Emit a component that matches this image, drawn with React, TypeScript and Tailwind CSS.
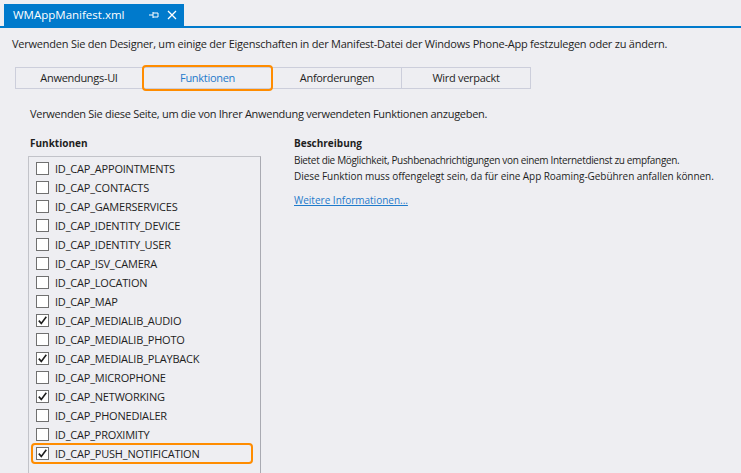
import React from "react";

const items: [string, boolean][] = [
  ["ID_CAP_APPOINTMENTS", false],
  ["ID_CAP_CONTACTS", false],
  ["ID_CAP_GAMERSERVICES", false],
  ["ID_CAP_IDENTITY_DEVICE", false],
  ["ID_CAP_IDENTITY_USER", false],
  ["ID_CAP_ISV_CAMERA", false],
  ["ID_CAP_LOCATION", false],
  ["ID_CAP_MAP", false],
  ["ID_CAP_MEDIALIB_AUDIO", true],
  ["ID_CAP_MEDIALIB_PHOTO", false],
  ["ID_CAP_MEDIALIB_PLAYBACK", true],
  ["ID_CAP_MICROPHONE", false],
  ["ID_CAP_NETWORKING", true],
  ["ID_CAP_PHONEDIALER", false],
  ["ID_CAP_PROXIMITY", false],
  ["ID_CAP_PUSH_NOTIFICATION", true],
];

function Check({ checked }: { checked: boolean }) {
  return (
    <div className="w-[13px] h-[13px] border border-[#707070] bg-white flex items-center justify-center shrink-0">
      {checked && (
        <svg width="11" height="11" viewBox="0 0 11 11">
          <path d="M1.8 5.6 L4.3 8.4 L9.3 1.8" fill="none" stroke="#1e1e1e" strokeWidth="1.6" />
        </svg>
      )}
    </div>
  );
}

export default function App() {
  return (
    <div
      className="w-[741px] h-[473px] bg-[#eeeef2] overflow-hidden text-[#1e1e1e] text-[11px] leading-[16px] whitespace-nowrap"
      style={{ fontFamily: '"Open Sans", "Noto Sans", sans-serif' }}
    >
      {/* document tab */}
      <div className="pt-[4px] pl-[4px] flex">
        <div className="w-[180px] h-[22px] bg-[#007acc] text-white flex items-center pl-[9px]">
          <span className="text-[11.5px]">WMAppManifest.xml</span>
          <div className="ml-auto flex items-center mr-[7px] gap-[8px]">
            <svg width="10" height="8" viewBox="0 0 10 8">
              <path d="M0 4 H4 M4 1 V7 M4 2 H9 V6 H4" fill="none" stroke="white" strokeWidth="1" />
            </svg>
            <svg width="10" height="10" viewBox="0 0 10 10">
              <path d="M1 1 L9 9 M9 1 L1 9" fill="none" stroke="white" strokeWidth="1.3" />
            </svg>
          </div>
        </div>
      </div>
      <div className="h-[2px] bg-[#007acc]" />

      <div className="pl-[12px] mt-[8px] tracking-[-0.23px]">
        Verwenden Sie den Designer, um einige der Eigenschaften in der Manifest-Datei der Windows Phone-App festzulegen oder zu ändern.
      </div>

      {/* tabs */}
      <div className="flex ml-[15px] mt-[15px] h-[22px] tracking-[-0.3px]">
        <div className="w-[128px] border border-[#ccceDB] flex items-center justify-center text-[#1e1e1e]">Anwendungs-UI</div>
        <div className="relative w-[129px] border-y border-[#ccceDB] flex items-center justify-center text-[#1e7acb]">
          Funktionen
          <div className="absolute -left-[1px] -right-[1px] -top-[3px] -bottom-[3px] border-2 border-[#ff8c00] rounded-[4px]" />
        </div>
        <div className="w-[130px] border border-[#ccceDB] flex items-center justify-center">Anforderungen</div>
        <div className="w-[129px] border border-l-0 border-[#ccceDB] flex items-center justify-center">Wird verpackt</div>
      </div>

      <div className="pl-[30px] mt-[17px] tracking-[-0.29px]">
        Verwenden Sie diese Seite, um die von Ihrer Anwendung verwendeten Funktionen anzugeben.
      </div>

      <div className="flex mt-[13px]">
        <div className="ml-[28px] w-[233px] shrink-0">
          <div className="font-bold pl-[2px] text-[10px]">Funktionen</div>
          <div className="mt-[5px] border-l border-t border-r border-[#c2c3c9] border-r-[#a9aab2] pt-[2px] pl-[7px] h-[330px]">
            {items.map(([name, checked]) => {
              const hl = name === "ID_CAP_PUSH_NOTIFICATION";
              return (
                <div key={name} className="relative flex items-center h-[19px] gap-[6px]">
                  <Check checked={checked} />
                  <span className="tracking-[-0.2px]">{name}</span>
                  {hl && (
                    <div className="absolute -left-[5px] w-[222px] -top-[1px] -bottom-[1px] border-2 border-[#ff8c00] rounded-[4px]" />
                  )}
                </div>
              );
            })}
          </div>
        </div>
        <div className="ml-[33px] text-[10px]">
          <div className="font-bold">Beschreibung</div>
          <div className="mt-[1px] tracking-[-0.33px]">
            Bietet die Möglichkeit, Pushbenachrichtigungen von einem Internetdienst zu empfangen.
          </div>
          <div className="tracking-[-0.06px]">Diese Funktion muss offengelegt sein, da für eine App Roaming-Gebühren anfallen können.</div>
          <div className="mt-[8px] text-[#1e7acb] underline">Weitere Informationen...</div>
        </div>
      </div>
    </div>
  );
}
